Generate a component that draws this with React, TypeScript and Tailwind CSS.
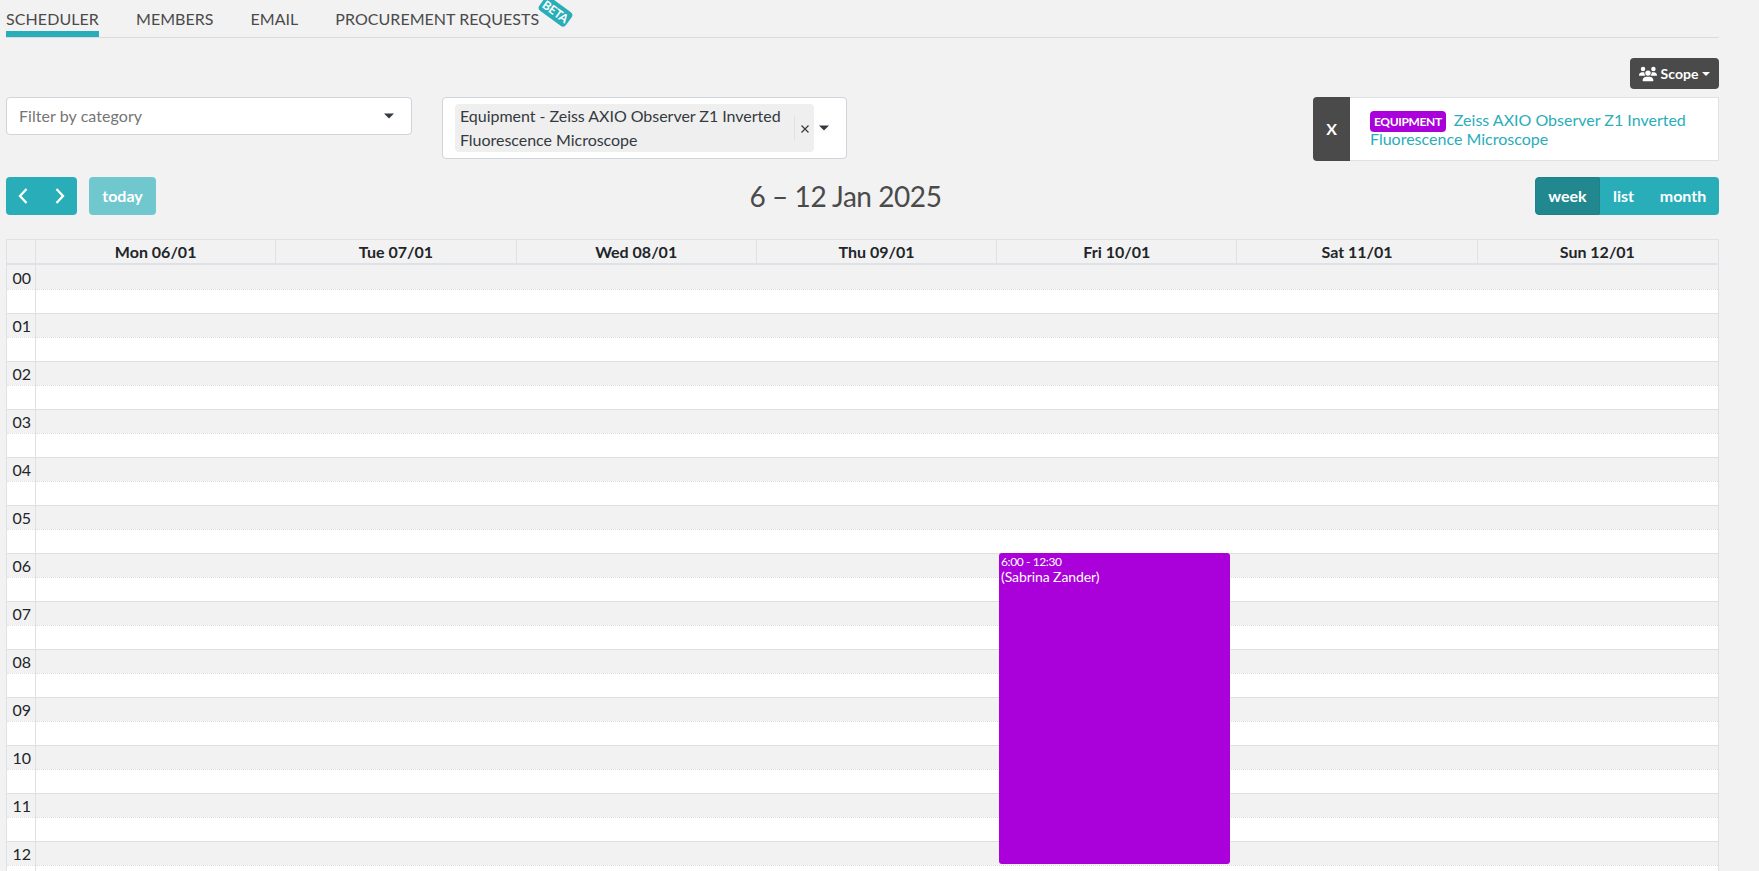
import { FaUsers } from "react-icons/fa6";

const tabs = ["SCHEDULER", "MEMBERS", "EMAIL", "PROCUREMENT REQUESTS"];
const days = ["Mon 06/01", "Tue 07/01", "Wed 08/01", "Thu 09/01", "Fri 10/01", "Sat 11/01", "Sun 12/01"];
const hours = ["00", "01", "02", "03", "04", "05", "06", "07", "08", "09", "10", "11", "12"];

function Caret({ className = "" }: { className?: string }) {
  return (
    <svg viewBox="0 0 10 6" className={"h-[6px] w-[10px] shrink-0 " + className} fill="currentColor">
      <path d="M0 0.5h10L5 5.5z" />
    </svg>
  );
}

function Chevron({ d }: { d: string }) {
  return (
    <svg viewBox="0 0 10 16" className="h-4 w-[10px]" fill="none" stroke="currentColor" strokeWidth="2.3">
      <path d={d} />
    </svg>
  );
}

function Tabs() {
  return (
    <nav className="flex h-[38px] gap-[37px] border-b border-[#dbdbdb] text-[#4a4a4a]">
      {tabs.map((t, i) => (
        <div
          key={t}
          className={
            "relative h-[37px] pt-[7px] leading-6 " +
            (i === 0 ? "w-[93px] border-b-[6px] border-[#29adb9] tracking-[0.08px]" : "tracking-[0.04px]")
          }
        >
          {t}
          {i === 3 && (
            <span className="absolute -right-[33px] top-[3px] flex h-[17px] w-[33px] rotate-[36deg] items-center justify-center rounded-[4px] bg-[#29adb9] text-[12px] font-bold tracking-[-0.2px] text-white">
              BETA
            </span>
          )}
        </div>
      ))}
    </nav>
  );
}

function Filters() {
  return (
    <div className="mt-2 flex items-start">
      <div className="flex h-[38px] w-[406px] items-center justify-between rounded-[4px] border border-[#ced4da] bg-white pl-3 pr-[17px] text-[#757575]">
        <span className="tracking-[0.06px]">Filter by category</span>
        <Caret className="mb-px text-[#343a40]" />
      </div>
      <div className="ml-[30px] flex h-[62px] w-[405px] items-center rounded-[4px] border border-[#ced4da] bg-white pl-3 text-[#343a40]">
        <div className="flex h-12 w-[359px] items-center rounded-[4px] bg-[#efefef] pl-[5px]">
          <span className="w-[334px] leading-6 tracking-[-0.03px]">
            Equipment - Zeiss AXIO Observer Z1 Inverted Fluorescence Microscope
          </span>
          <span className="flex h-6 flex-1 items-center justify-center border-l border-[#dee2e6]">
            <svg viewBox="0 0 8 8" className="mt-[2px] h-2 w-2" stroke="currentColor" strokeWidth="1.2">
              <path d="M0.5 0.5l7 7M7.5 0.5l-7 7" />
            </svg>
          </span>
        </div>
        <Caret className="mb-px ml-[5px]" />
      </div>
      <div className="ml-auto flex h-16 w-[406px]">
        <button className="w-[37px] rounded-l-[4px] bg-[#4a4a4a] font-bold text-white">X</button>
        <div className="flex-1 border border-l-0 border-[#dee2e6] bg-white pl-5 pt-3 leading-[19px] text-[#29adb9]">
          <span className="mr-2 rounded-[4px] bg-[#aa00d9] px-1 py-[3px] text-[12px] font-bold leading-none tracking-[-0.35px] text-white">
            EQUIPMENT
          </span>
          Zeiss AXIO Observer Z1 Inverted Fluorescence Microscope
        </div>
      </div>
    </div>
  );
}

function Toolbar() {
  return (
    <div className="mt-4 flex h-[38px] items-center justify-between font-bold text-white">
      <div className="flex h-full gap-3">
        <div className="flex w-[71px] items-center justify-between rounded-[4px] bg-[#29adb9] px-3">
          <Chevron d="M8.5 1L2 8l6.500 7" />
          <Chevron d="M1.500 1L8 8l-6.500 7" />
        </div>
        <button className="w-[67px] rounded-[4px] bg-[#70c7ce]">today</button>
      </div>
      <h2 className="text-[28px] font-normal tracking-[-0.45px] text-[#4a4a4a]">6 – 12 Jan 2025</h2>
      <div className="flex h-full">
        <button className="w-[65px] rounded-l-[4px] border border-[#1f8189] bg-[#21888f]">week</button>
        <button className="w-[47px] bg-[#29adb9]">list</button>
        <button className="w-[72px] rounded-r-[4px] bg-[#29adb9]">month</button>
      </div>
    </div>
  );
}

function Calendar() {
  return (
    <div className="mt-6 flex-1 border border-b-0 border-[#dee2e6] text-[#212529]">
      <div className="mr-px flex h-[25px] border-b-2 border-[#dee2e6] font-bold">
        <div className="w-[28px]" />
        {days.map((d) => (
          <div key={d} className="flex flex-1 items-center justify-center border-l border-[#dee2e6] pt-px leading-[22px]">
            {d}
          </div>
        ))}
      </div>
      <div className="relative">
        {hours.map((h, i) => (
          <div key={h} className="flex h-12">
            <div className="w-[28px]">
              <div
                className={
                  "h-6 border-t bg-[#f2f2f2] pr-1 text-right leading-6 " +
                  (i ? "border-[#dee2e6]" : "border-transparent")
                }
              >
                {h}
              </div>
              <div className="h-6 border-t border-dotted border-[#dee2e6] bg-white" />
            </div>
            <div className="flex-1 border-l border-[#dee2e6]">
              <div className={"h-6 bg-[#f2f2f2] " + (i ? "border-t border-[#dedfe0]" : "")} />
              <div className="h-6 border-t border-dotted border-[#dddddd] bg-white" />
            </div>
          </div>
        ))}
        <div className="absolute left-[992px] top-[288px] h-[311px] w-[231px] rounded-[3px] bg-[#aa00d9] pl-[2px] pt-[2px] text-white">
          <div className="text-[12px] leading-[14px] tracking-[-0.4px]">6:00 - 12:30</div>
          <div className="text-[14px] leading-[16px] tracking-[-0.08px]">(Sabrina Zander)</div>
        </div>
      </div>
    </div>
  );
}

export default function App() {
  return (
    <div className="flex h-[871px] flex-col overflow-hidden bg-[#f2f2f2] pl-[6px] pr-10 font-['Lato',sans-serif] text-[16px]">
      <Tabs />
      <div className="mt-5 flex justify-end">
        <button className="flex h-[31px] w-[89px] items-center justify-center rounded-[4px] bg-[#4a4a4a] text-[14px] font-bold text-white">
          <FaUsers className="mr-1 h-[18px] w-[18px]" />
          Scope
          <svg viewBox="0 0 8 4" className="ml-1 h-1 w-2" fill="currentColor">
            <path d="M0 0h8L4 4z" />
          </svg>
        </button>
      </div>
      <Filters />
      <Toolbar />
      <Calendar />
    </div>
  );
}
